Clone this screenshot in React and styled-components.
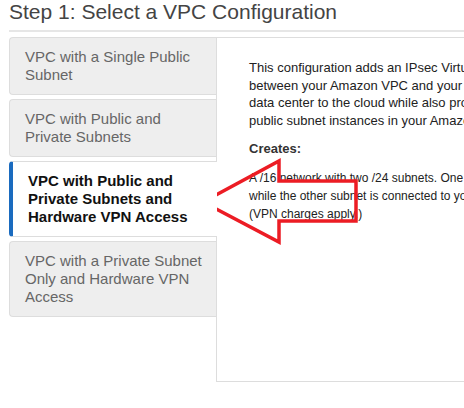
import React from "react";
import styled, { createGlobalStyle } from "styled-components";

const Global = createGlobalStyle`
  html, body {
    margin: 0;
    padding: 0;
    overflow: hidden;
    background: #ffffff;
    font-family: "Liberation Sans", Arial, sans-serif;
  }
`;

const Page = styled.div`
  position: relative;
  width: 720px;
  padding-left: 9px;
`;

const Header = styled.div`
  border-bottom: 2px solid #e6e6e6;
  padding-bottom: 6px;
  margin-bottom: 5px;
`;

const Title = styled.h1`
  margin: 0;
  font-size: 21px;
  line-height: 24px;
  font-weight: normal;
  color: #444444;
`;

const Body = styled.div`
  display: flex;
  align-items: flex-start;
`;

const TabList = styled.div`
  width: 207px;
  flex: none;
  display: flex;
  flex-direction: column;
  gap: 4px;
`;

const Tab = styled.div`
  position: relative;
  z-index: ${(p) => (p.$active ? 1 : 0)};
  margin-right: ${(p) => (p.$active ? "-1px" : "0")};
  background: ${(p) => (p.$active ? "#ffffff" : "#eeeeee")};
  border: 1px solid #dddddd;
  border-right: none;
  border-left: ${(p) => (p.$active ? "4px solid #1a6bbf" : "1px solid #dddddd")};
  border-radius: 4px 0 0 4px;
  padding: 10px 10px 10px 15px;
  font-size: 15px;
  line-height: 18px;
  font-weight: ${(p) => (p.$active ? "bold" : "normal")};
  color: ${(p) => (p.$active ? "#111111" : "#666666")};
`;

const Panel = styled.div`
  flex: 1;
  min-height: 322px;
  border: 1px solid #dddddd;
  padding: 21px 32px 0 32px;
`;

const Para = styled.p`
  margin: 0;
  font-size: ${(p) => (p.$small ? "12px" : "13px")};
  line-height: ${(p) => (p.$small ? "18px" : "17.5px")};
  color: #222222;
  white-space: nowrap;
`;

const Heading = styled.div`
  margin: 11px 0 11px;
  font-size: 13px;
  line-height: 17.5px;
  font-weight: bold;
  color: #333333;
`;

const Arrow = styled.svg`
  position: absolute;
  left: 0;
  top: 0;
  width: 464px;
  height: 408px;
  pointer-events: none;
  overflow: visible;
`;

const tabs = [
  "VPC with a Single Public Subnet",
  "VPC with Public and Private Subnets",
  "VPC with Public and Private Subnets and Hardware VPN Access",
  "VPC with a Private Subnet Only and Hardware VPN Access",
];

export default function App() {
  return (
    <Page>
      <Global />
      <Header>
        <Title>Step 1: Select a VPC Configuration</Title>
      </Header>
      <Body>
        <TabList>
          {tabs.map((t, i) => (
            <Tab key={i} $active={i === 2}>
              {t}
            </Tab>
          ))}
        </TabList>
        <Panel>
          <Para>
            This configuration adds an IPsec Virtual Private Network (VPN) connection
            <br />
            between your Amazon VPC and your data center - effectively extending your
            <br />
            data center to the cloud while also providing direct access to the Internet for
            <br />
            public subnet instances in your Amazon VPC.
          </Para>
          <Heading>Creates:</Heading>
          <Para $small>
            A /16 network with two /24 subnets. One subnet is directly connected to the Internet
            <br />
            while the other subnet is connected to your corporate network via IPsec VPN tunnel.
            <br />
            (VPN charges apply.)
          </Para>
        </Panel>
      </Body>
      <Arrow viewBox="0 0 464 408">
        <polygon
          points="203,202 279,161 279,181 356,181 356,221 279,221 279,242"
          fill="none"
          stroke="#ec1c24"
          strokeWidth="3.5"
          strokeLinejoin="miter"
        />
      </Arrow>
    </Page>
  );
}
